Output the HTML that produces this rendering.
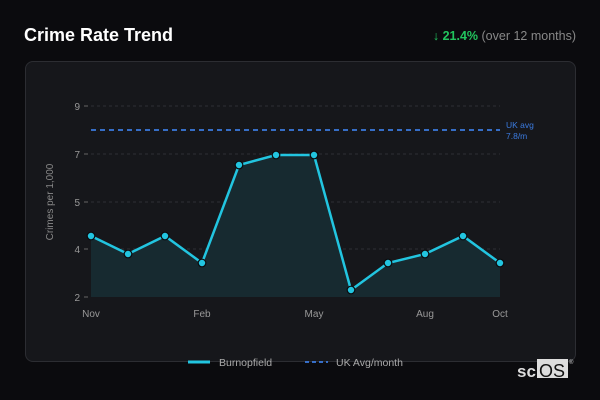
<!DOCTYPE html><html><head><style>
body{margin:0;width:600px;height:400px;background:#0b0b0e;font-family:"Liberation Sans",sans-serif;position:relative;overflow:hidden}
.t{position:absolute;left:24px;top:25px;color:#fff;font-weight:bold;font-size:18px}
.r{position:absolute;right:24px;top:29px;font-size:12.5px;color:#888}
.r b{color:#22c55e}
.card{position:absolute;left:25px;top:61px;width:549px;height:299px;background:#16171b;border:1px solid #2c2d32;border-radius:8px}
svg{position:absolute;left:0;top:0}
</style></head><body>
<div class="t">Crime Rate Trend</div>
<div class="r"><b>↓ 21.4%</b> (over 12 months)</div>
<div class="card"></div>
<svg width="600" height="400" font-family="Liberation Sans, sans-serif">
<g stroke="#2e2f34" stroke-dasharray="3,3" stroke-width="1">
<line x1="91" x2="500" y1="106" y2="106"/><line x1="91" x2="500" y1="154" y2="154"/><line x1="91" x2="500" y1="202" y2="202"/><line x1="91" x2="500" y1="249" y2="249"/>
</g>
<g stroke="#666" stroke-width="1"><line x1="84" x2="88" y1="106" y2="106"/><line x1="84" x2="88" y1="154" y2="154"/><line x1="84" x2="88" y1="202" y2="202"/><line x1="84" x2="88" y1="249" y2="249"/><line x1="84" x2="88" y1="297" y2="297"/></g>
<g fill="#999" font-size="10" text-anchor="end"><text x="80" y="110">9</text><text x="80" y="158">7</text><text x="80" y="206">5</text><text x="80" y="253">4</text><text x="80" y="301">2</text></g>
<text transform="translate(53,202) rotate(-90)" fill="#888" font-size="10" text-anchor="middle">Crimes per 1,000</text>
<line x1="91" x2="500" y1="130" y2="130" stroke="#3b7be0" stroke-width="1.8" stroke-dasharray="5,4"/>
<text x="506" y="128" fill="#3b7be0" font-size="8.5">UK avg</text><text x="506" y="139" fill="#3b7be0" font-size="8.5">7.8/m</text>
<polygon fill="#172a30" points="91,297 91,236 128,254 165,236 202,263 239,165 276,155 314,155 351,290 388,263 425,254 463,236 500,263 500,297"/>
<polyline fill="none" stroke="#22c5e0" stroke-width="2.5" points="91,236 128,254 165,236 202,263 239,165 276,155 314,155 351,290 388,263 425,254 463,236 500,263"/>
<g fill="#22c5e0" stroke="#0b0b0e" stroke-width="1.2">
<circle cx="91" cy="236" r="3.8"/><circle cx="128" cy="254" r="3.8"/><circle cx="165" cy="236" r="3.8"/><circle cx="202" cy="263" r="3.8"/><circle cx="239" cy="165" r="3.8"/><circle cx="276" cy="155" r="3.8"/><circle cx="314" cy="155" r="3.8"/><circle cx="351" cy="290" r="3.8"/><circle cx="388" cy="263" r="3.8"/><circle cx="425" cy="254" r="3.8"/><circle cx="463" cy="236" r="3.8"/><circle cx="500" cy="263" r="3.8"/>
</g>
<g fill="#999" font-size="10" text-anchor="middle"><text x="91" y="317">Nov</text><text x="202" y="317">Feb</text><text x="314" y="317">May</text><text x="425" y="317">Aug</text><text x="500" y="317">Oct</text></g>
<line x1="188" x2="210" y1="362" y2="362" stroke="#22c5e0" stroke-width="3"/>
<text x="219" y="366" fill="#aaa" font-size="10.5">Burnopfield</text>
<line x1="305" x2="328" y1="362" y2="362" stroke="#3b7be0" stroke-width="1.8" stroke-dasharray="4,3"/>
<text x="336" y="366" fill="#aaa" font-size="10.5">UK Avg/month</text>
<text x="517" y="377" fill="#ddd" font-size="17" font-weight="bold">sc</text>
<rect x="537" y="359" width="31" height="19" fill="#ddd"/>
<text x="539" y="377" fill="#111" font-size="18">OS</text>
<text x="569" y="364" fill="#ccc" font-size="6">®</text>
</svg>
</body></html>
